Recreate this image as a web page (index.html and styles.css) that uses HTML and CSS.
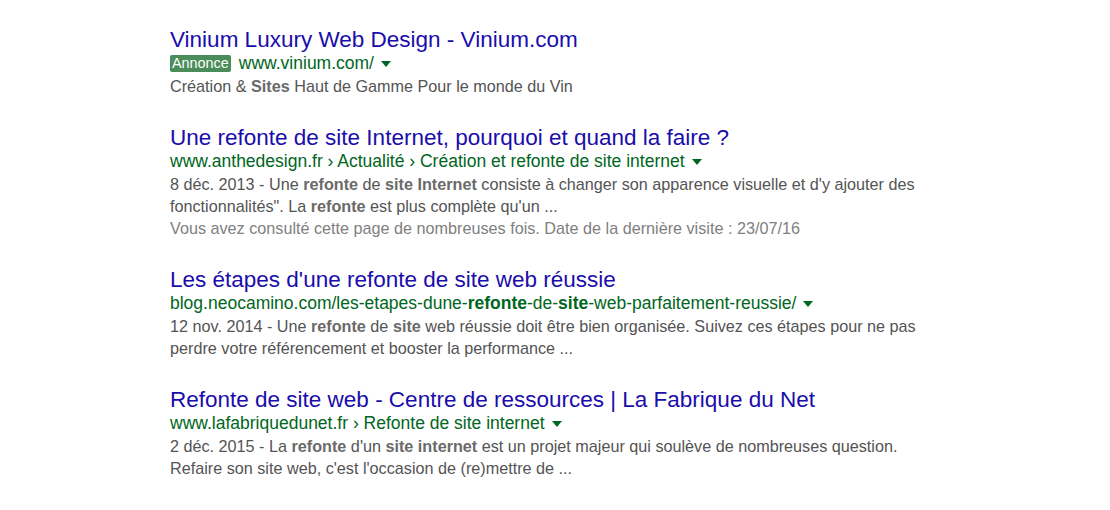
FILE: index.html
```html
<!DOCTYPE html>
<html lang="fr">
<head>
<meta charset="utf-8">
<title>Résultats</title>
<link rel="stylesheet" href="styles.css">
</head>
<body>
<div class="results">
  <div class="result">
    <div class="title">Vinium Luxury Web Design - Vinium.com</div>
    <div class="url"><span class="badge">Annonce</span>www.vinium.com/<span class="arrow"></span></div>
    <div class="snippet">Création &amp; <b>Sites</b> Haut de Gamme Pour le monde du Vin</div>
  </div>
  <div class="result">
    <div class="title">Une refonte de site Internet, pourquoi et quand la faire ?</div>
    <div class="url">www.anthedesign.fr › Actualité › Création et refonte de site internet<span class="arrow"></span></div>
    <div class="snippet">8 déc. 2013 - Une <b>refonte</b> de <b>site Internet</b> consiste à changer son apparence visuelle et d'y ajouter des<br>fonctionnalités". La <b>refonte</b> est plus complète qu'un ...</div>
    <div class="snippet visited">Vous avez consulté cette page de nombreuses fois. Date de la dernière visite : 23/07/16</div>
  </div>
  <div class="result">
    <div class="title">Les étapes d'une refonte de site web réussie</div>
    <div class="url">blog.neocamino.com/les-etapes-dune-<b>refonte</b>-de-<b>site</b>-web-parfaitement-reussie/<span class="arrow"></span></div>
    <div class="snippet">12 nov. 2014 - Une <b>refonte</b> de <b>site</b> web réussie doit être bien organisée. Suivez ces étapes pour ne pas<br>perdre votre référencement et booster la performance ...</div>
  </div>
  <div class="result">
    <div class="title">Refonte de site web - Centre de ressources | La Fabrique du Net</div>
    <div class="url">www.lafabriquedunet.fr › Refonte de site internet<span class="arrow"></span></div>
    <div class="snippet">2 déc. 2015 - La <b>refonte</b> d'un <b>site internet</b> est un projet majeur qui soulève de nombreuses question.<br>Refaire son site web, c'est l'occasion de (re)mettre de ...</div>
  </div>
</div>
</body>
</html>
```

FILE: styles.css
```css
html, body {
  margin: 0;
  padding: 0;
  background: #ffffff;
}
body {
  font-family: "Liberation Sans", Arial, sans-serif;
}
.results {
  padding: 28px 0 0 170px;
  display: flex;
  flex-direction: column;
  gap: 29px;
}
.title {
  font-size: 22.5px;
  line-height: 24px;
  color: #1a0dab;
  white-space: nowrap;
}
.url {
  font-size: 17.5px;
  line-height: 23px;
  color: #006621;
  white-space: nowrap;
  display: flex;
  align-items: center;
}
.url b {
  font-weight: bold;
}
.badge {
  background: #4b8d5a;
  color: #ffffff;
  font-size: 14.4px;
  line-height: 17px;
  padding: 0 2px;
  border-radius: 2px;
  margin-right: 8px;
}
.arrow {
  display: inline-block;
  width: 0;
  height: 0;
  border-top: 6px solid #006621;
  border-left: 5px solid transparent;
  border-right: 5px solid transparent;
  margin-left: 7px;
  margin-top: 1px;
}
.snippet {
  font-size: 16.2px;
  line-height: 22px;
  color: #545454;
}
.snippet b {
  color: #6a6a6a;
}
.snippet.visited {
  color: #808080;
}
```
